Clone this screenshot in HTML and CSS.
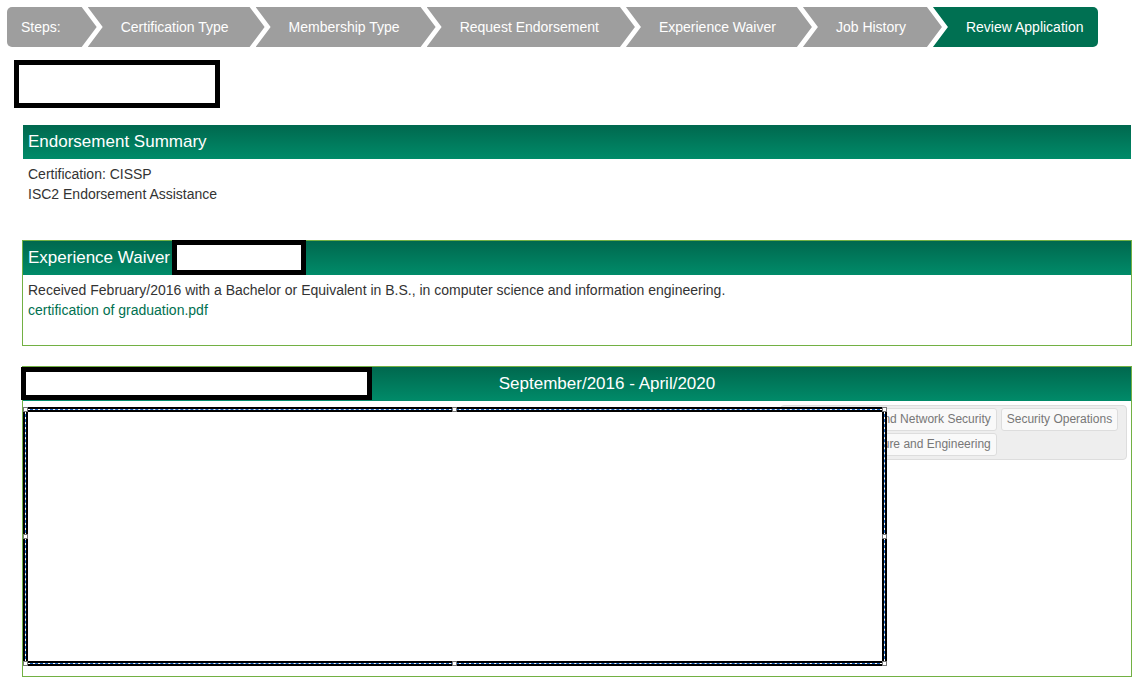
FILE: index.html
```html
<!DOCTYPE html>
<html lang="en">

<head>
    <meta charset="UTF-8" />
    <title>Review Application</title>
    <link rel="stylesheet" href="styles.css">
</head>

<body>

    <!-- Steps bar -->
    <ul class="steps">
        <li class="step first">Steps:</li>
        <li class="step">Certification Type</li>
        <li class="step">Membership Type</li>
        <li class="step">Request Endorsement</li>
        <li class="step">Experience Waiver</li>
        <li class="step">Job History</li>
        <li class="step last active">Review Application</li>
    </ul>

    <div class="redact name-redact"></div>

    <div class="sections">

        <div class="section plain summary">
            <div class="section-head">Endorsement Summary</div>
            <div class="section-body">
                Certification: CISSP<br>
                ISC2 Endorsement Assistance
            </div>
        </div>

        <div class="section waiver">
            <div class="section-head">
                Experience Waiver
                <span class="redact head-redact"></span>
            </div>
            <div class="section-body">
                Received February/2016 with a Bachelor or Equivalent in B.S., in computer science and information engineering.<br>
                <a href="#">certification of graduation.pdf</a>
            </div>
        </div>

        <div class="section job">
            <div class="section-head centered">
                <span class="redact job-redact"></span>
                September/2016 - April/2020
            </div>
            <div class="section-body job-body">
                <div class="job-desc"></div>
                <div class="domains">
                    <span class="tag">Communication and Network Security</span>
                    <span class="tag">Security Operations</span>
                    <span class="tag">Security Architecture and Engineering</span>
                </div>

                <!-- selection / redaction overlay -->
                <div class="selection">
                    <i class="h tl"></i><i class="h tm"></i><i class="h tr"></i>
                    <i class="h ml"></i><i class="h mr"></i>
                    <i class="h bl"></i><i class="h bm"></i><i class="h br"></i>
                </div>
            </div>
        </div>

    </div>

</body>

</html>
```

FILE: styles.css
```css
* {
    box-sizing: border-box;
}

body {
    margin: 0;
    padding: 7px 0 0 0;
    font-family: "Liberation Sans", Arial, sans-serif;
    font-size: 14px;
    color: #333;
    background: #fff;
}

/* Steps bar */
.steps {
    list-style: none;
    margin: 0 0 0 7px;
    padding: 0;
    display: flex;
    height: 40px;
}

.step {
    background-color: #9e9e9e;
    color: #fff;
    height: 40px;
    line-height: 40px;
    padding: 0 36px 0 33px;
    margin-left: -9px;
    white-space: nowrap;
    clip-path: polygon(0 0, calc(100% - 15px) 0, 100% 50%, calc(100% - 15px) 100%, 0 100%, 15px 50%);
}

.step.first {
    margin-left: 0;
    padding-left: 14px;
    border-radius: 5px 0 0 5px;
    clip-path: polygon(0 0, calc(100% - 15px) 0, 100% 50%, calc(100% - 15px) 100%, 0 100%);
}

.step.last {
    padding-right: 15px;
    border-radius: 0 5px 5px 0;
    clip-path: polygon(0 0, 100% 0, 100% 100%, 0 100%, 15px 50%);
}

.step.active {
    background-color: #007052;
}

/* redaction boxes */
.redact {
    display: block;
    background: #fff;
    border: 5px solid #000;
}

.name-redact {
    width: 206px;
    height: 48px;
    margin: 13px 0 0 14px;
}

/* Sections */
.sections {
    margin: 16px 7px 0 22px;
}

.section {
    border: 1px solid #72b043;
    margin-bottom: 20px;
}

.section.plain {
    border-color: transparent;
}

.summary {
    margin-bottom: 10px;
}

.section-head {
    position: relative;
    display: flex;
    align-items: center;
    height: 34px;
    padding-left: 5px;
    font-size: 17px;
    color: #fff;
    background: linear-gradient(to bottom, #00684e, #008b69);
}

.section-head.centered {
    justify-content: center;
    padding-left: 60px;
}

.head-redact {
    align-self: stretch;
    width: 134px;
    margin: -1px 0 0 2px;
    height: 35px;
}

.job-redact {
    position: absolute;
    left: -2px;
    top: 0;
    width: 351px;
    height: 33px;
}

.section-body {
    padding: 5px 5px 25px;
    line-height: 20px;
}

.section-body a {
    color: #00704f;
    text-decoration: none;
}

/* Job history body */
.job-body {
    position: relative;
    display: flex;
    gap: 10px;
    padding: 4px 4px 0 5px;
    min-height: 275px;
}

.job-desc {
    flex: 1;
}

.domains {
    width: 347px;
    align-self: flex-start;
    display: flex;
    flex-wrap: wrap;
    gap: 2px 4px;
    padding: 2px 3px 3px;
    background: #eee;
    border: 1px solid #ddd;
    border-radius: 4px;
}

.tag {
    font-size: 12px;
    line-height: 15px;
    color: #777;
    background: #f9f9f9;
    border: 1px solid #ddd;
    border-radius: 3px;
    padding: 3px 5px;
    white-space: nowrap;
}

.selection {
    position: absolute;
    left: 2px;
    top: 8px;
    width: 860px;
    height: 255px;
    background: #fff;
    border: 1px dashed #1560bd;
    outline: 2px solid #000;
    box-shadow: inset 0 0 0 2px #000;
}

.h {
    position: absolute;
    width: 5px;
    height: 5px;
    background: #fff;
    border: 1px solid #777;
}

.tl { left: -3px; top: -3px; }
.tm { left: calc(50% - 3px); top: -3px; }
.tr { right: -3px; top: -3px; }
.ml { left: -3px; top: calc(50% - 3px); }
.mr { right: -3px; top: calc(50% - 3px); }
.bl { left: -3px; bottom: -3px; }
.bm { left: calc(50% - 3px); bottom: -3px; }
.br { right: -3px; bottom: -3px; }
```
